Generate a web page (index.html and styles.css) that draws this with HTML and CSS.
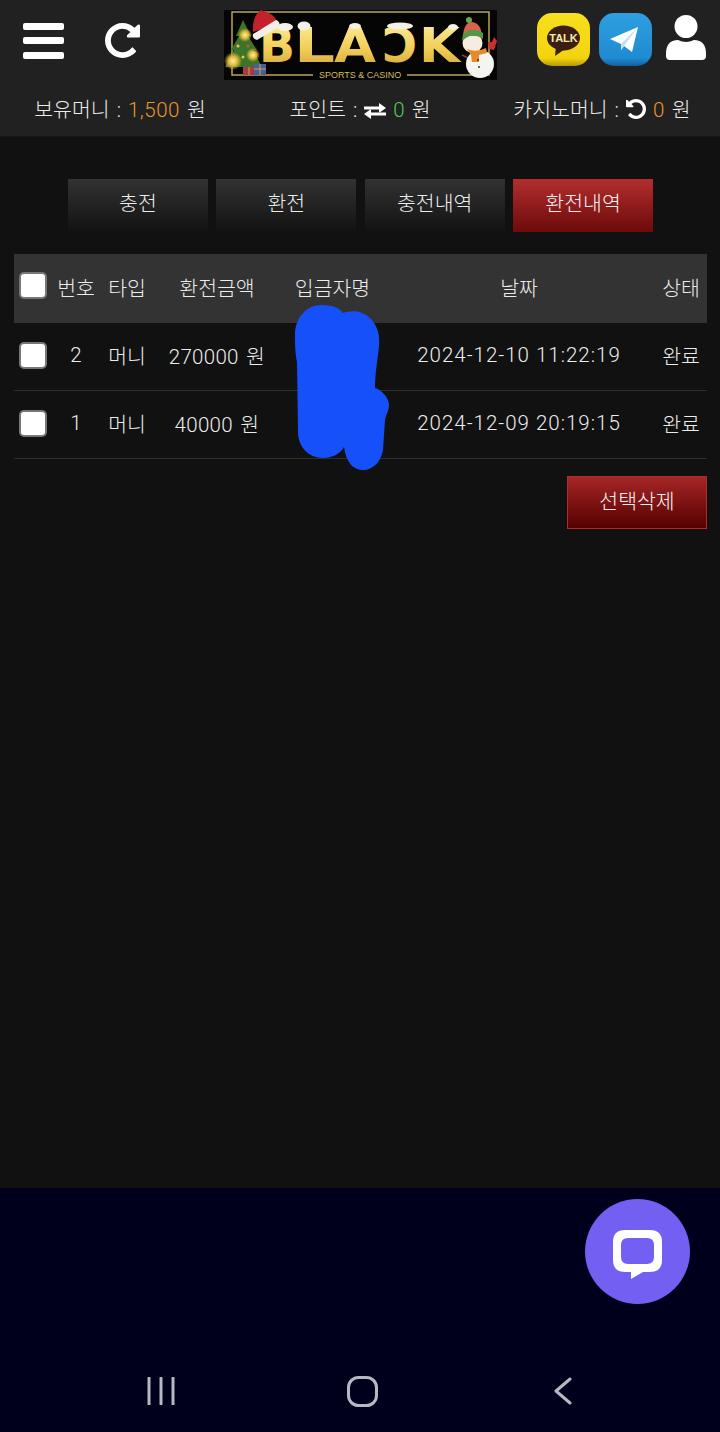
FILE: index.html
```html
<!DOCTYPE html>
<html lang="ko">
<head>
    <meta charset="UTF-8">
    <meta name="viewport" content="width=device-width, initial-scale=1.0">
    <title>환전내역</title>
    <link rel="stylesheet" href="styles.css">
</head>
<body>
    <header class="site-header">
        <div class="top-row">
            <div class="top-left">
                <div class="menu-icon"><span></span><span></span><span></span></div>
                <svg class="refresh-icon" viewBox="128 128 1536 1536" width="35" height="35"><path fill="#fff" d="M1664 256v448q0 26-19 45t-45 19h-448q-42 0-59-40-17-39 14-69l138-138q-148-137-349-137-104 0-198.5 40.5t-163.5 109.5-109.5 163.5-40.5 198.5 40.5 198.5 109.5 163.5 163.5 109.5 198.5 40.5q119 0 225-52t179-147q7-10 23-12 15 0 25 9l137 138q9 8 9.5 20.5t-7.5 22.5q-109 132-264 204.5t-327 72.5q-156 0-298-61t-245-164-164-245-61-298 61-298 164-245 245-164 298-61q147 0 284.5 55.5t244.5 156.5l130-129q29-31 70-14 39 17 39 59z"/></svg>
            </div>
            <svg class="logo" viewBox="0 0 273 70" width="273" height="70">
                <defs>
                    <linearGradient id="gold" x1="0" y1="0" x2="0" y2="1">
                        <stop offset="0" stop-color="#fff3a8"/>
                        <stop offset="0.55" stop-color="#f2cf58"/>
                        <stop offset="1" stop-color="#cfa032"/>
                    </linearGradient>
                    <radialGradient id="glow">
                        <stop offset="0" stop-color="#fff2a0"/>
                        <stop offset="0.5" stop-color="#e0b83a"/>
                        <stop offset="1" stop-color="#e0b83a" stop-opacity="0"/>
                    </radialGradient>
                </defs>
                <rect width="273" height="70" fill="#050505"/>
                <path d="M89 65H8V2H265V65H183" fill="none" stroke="#b9a45c" stroke-width="1.5"/>
                <g class="logo-letters" fill="url(#gold)">
                    <text x="35" y="52" textLength="36" lengthAdjust="spacingAndGlyphs">B</text>
                    <text x="70" y="52" textLength="41" lengthAdjust="spacingAndGlyphs">L</text>
                    <text x="110" y="52" textLength="42" lengthAdjust="spacingAndGlyphs">A</text>
                    <text transform="translate(193 52) scale(-1 1)" x="0" y="0">C</text>
                    <text x="195" y="52" textLength="41" lengthAdjust="spacingAndGlyphs">K</text>
                </g>
                <g fill="#f4f1e6">
                    <ellipse cx="61" cy="17" rx="8" ry="4"/>
                    <ellipse cx="80" cy="16" rx="6.500" ry="4.500"/>
                    <ellipse cx="131" cy="16" rx="6" ry="3"/>
                    <ellipse cx="176" cy="16" rx="13" ry="3.500"/>
                    <ellipse cx="229" cy="17" rx="5" ry="3"/>
                </g>
                <text class="logo-sub" x="95" y="68">SPORTS &amp; CASINO</text>
                <!-- tree -->
                <path d="M19 10L27 26H24L33 40H29L38 57H1L10 40H7L15 26H12Z" fill="#3c7428"/>
                <circle cx="21" cy="25" r="7" fill="url(#glow)"/>
                <circle cx="9" cy="51" r="9" fill="url(#glow)"/>
                <circle cx="29" cy="45" r="7" fill="url(#glow)"/>
                <circle cx="14" cy="36" r="1.500" fill="#e8c84a"/>
                <circle cx="24" cy="36" r="1.500" fill="#d05040"/>
                <circle cx="19" cy="47" r="1.500" fill="#e8c84a"/>
                <rect x="19" y="57" width="12" height="8" fill="#a83a48"/>
                <rect x="30" y="54" width="12" height="11" fill="#46609c"/>
                <path d="M25 57V65M36 54V65M30 59H42" stroke="#d9a04a" stroke-width="1"/>
                <!-- hat -->
                <path d="M29 22Q28 6 37 0Q50 3 54 13Z" fill="#c4222a"/>
                <path d="M29 24L52 10Q57 12 55 17L33 30Q28 29 29 24Z" fill="#f3f0ea"/>
                <!-- snowman -->
                <path d="M238 45L246 49" stroke="#7a4a2a" stroke-width="1.500"/>
                <circle cx="256" cy="54" r="14" fill="#f4f4f0"/>
                <circle cx="248.500" cy="33" r="10" fill="#f6ecdf"/>
                <path d="M239 26Q240 12 248 12Q257 13 258 26Z" fill="#d9624e"/>
                <path d="M238 31Q248 21 259 29L259 23Q248 16 239 24Z" fill="#4f9a4a"/>
                <circle cx="245" cy="10" r="3" fill="#6aa84f"/>
                <path d="M243 39Q252 43 262 38L263 43L255 45L255 52H248L247 45Z" fill="#e8892c"/>
                <path d="M264 32L268 32L270 27L273 31L270 40L265 39Z" fill="#c4322a"/>
                <circle cx="254" cy="50" r="1" fill="#333"/>
                <circle cx="255" cy="57" r="1" fill="#333"/>
            </svg>
            <div class="top-right">
                <svg viewBox="0 0 53 53" width="53" height="53">
                    <defs>
                        <linearGradient id="kakao" x1="0" y1="0" x2="0" y2="1">
                            <stop offset="0" stop-color="#f7e01c"/>
                            <stop offset="0.85" stop-color="#f2d40e"/>
                            <stop offset="1" stop-color="#b8960a"/>
                        </linearGradient>
                    </defs>
                    <rect width="53" height="53" rx="15" fill="url(#kakao)"/>
                    <ellipse cx="26.500" cy="25" rx="16.500" ry="12.500" fill="#3c1e10"/>
                    <path d="M19 33L18 43L28 36Z" fill="#3c1e10"/>
                    <text class="talk-text" x="26.500" y="29">TALK</text>
                </svg>
                <svg viewBox="0 0 53 53" width="53" height="53">
                    <defs>
                        <linearGradient id="tele" x1="0" y1="0" x2="0" y2="1">
                            <stop offset="0" stop-color="#2f9fe0"/>
                            <stop offset="0.85" stop-color="#1f8bd2"/>
                            <stop offset="1" stop-color="#135f9c"/>
                        </linearGradient>
                    </defs>
                    <rect width="53" height="53" rx="15" fill="url(#tele)"/>
                    <path d="M11 26L39 14L33 39L25 33L22 37L22 31Z" fill="#fff"/>
                    <path d="M22 31L39 14L25 33L22 37Z" fill="#c5def0"/>
                </svg>
                <svg class="user-icon" viewBox="0 0 40 45" width="40" height="45">
                    <circle cx="20" cy="11.500" r="11.500" fill="#fff"/>
                    <path d="M0 39Q0 25 12 25Q20 29 28 25Q40 25 40 39V41Q40 45 36 45H4Q0 45 0 41Z" fill="#fff"/>
                </svg>
            </div>
        </div>
        <div class="info-row">
            <div class="info-item">보유머니 : <span class="amount-orange">1,500</span> 원</div>
            <div class="info-item">포인트 : <svg class="info-icon" viewBox="0 0 22 16" width="22" height="16"><path fill="#fff" d="M0 3.500H15V0L22 5L15 10V6.500H0ZM22 9.500H7V6L0 11L7 16V12.500H22Z"/></svg> <span class="amount-green">0</span> 원</div>
            <div class="info-item info-casino">카지노머니 : <svg class="info-icon" viewBox="128 128 1536 1536" width="20" height="20"><path fill="#fff" transform="translate(1792 0) scale(-1 1)" d="M1664 256v448q0 26-19 45t-45 19h-448q-42 0-59-40-17-39 14-69l138-138q-148-137-349-137-104 0-198.5 40.5t-163.5 109.5-109.5 163.5-40.5 198.5 40.5 198.5 109.5 163.5 163.5 109.5 198.5 40.5q119 0 225-52t179-147q7-10 23-12 15 0 25 9l137 138q9 8 9.5 20.5t-7.5 22.5q-109 132-264 204.5t-327 72.5q-156 0-298-61t-245-164-164-245-61-298 61-298 164-245 245-164 298-61q147 0 284.5 55.5t244.5 156.5l130-129q29-31 70-14 39 17 39 59z"/></svg> <span class="amount-orange">0</span> 원</div>
        </div>
    </header>

    <main class="content">
        <div class="tabs">
            <div class="tab">충전</div>
            <div class="tab">환전</div>
            <div class="tab">충전내역</div>
            <div class="tab tab-active">환전내역</div>
        </div>

        <div class="table-wrap">
            <table class="history-table">
                <colgroup>
                    <col class="col-check">
                    <col class="col-no">
                    <col class="col-type">
                    <col class="col-amount">
                    <col class="col-name">
                    <col class="col-date">
                    <col class="col-status">
                </colgroup>
                <thead>
                    <tr>
                        <th><input type="checkbox" class="check"></th>
                        <th>번호</th>
                        <th>타입</th>
                        <th>환전금액</th>
                        <th>입금자명</th>
                        <th>날짜</th>
                        <th class="cell-status">상태</th>
                    </tr>
                </thead>
                <tbody>
                    <tr>
                        <td><input type="checkbox" class="check"></td>
                        <td>2</td>
                        <td>머니</td>
                        <td class="cell-amount">270000 원</td>
                        <td></td>
                        <td class="cell-date">2024-12-10 11:22:19</td>
                        <td class="cell-status">완료</td>
                    </tr>
                    <tr>
                        <td><input type="checkbox" class="check"></td>
                        <td>1</td>
                        <td>머니</td>
                        <td class="cell-amount">40000 원</td>
                        <td></td>
                        <td class="cell-date">2024-12-09 20:19:15</td>
                        <td class="cell-status">완료</td>
                    </tr>
                </tbody>
            </table>
            <!-- scribble over the depositor names -->
            <svg class="scribble" viewBox="294 304 96 166" width="96" height="166">
                <path fill="#1650f8" d="M322 305C335 305 340 309 343 313C350 310 362 310 370 318C378 326 380 336 379 346C378 358 375 372 375 388C382 390 389 398 389 405C389 411 386 414 385 420L383 450C381 462 373 470 363 470C353 470 346 462 344 447C340 454 332 458 323 458C308 458 298 446 298 432L297 362C295 352 295 345 295 335C295 318 306 305 322 305Z"/>
            </svg>
        </div>

        <div class="actions">
            <div class="delete-button">선택삭제</div>
        </div>
    </main>

    <nav class="bottom-nav">
        <div class="nav-slot">
            <svg viewBox="0 0 28 28" width="28" height="28"><path d="M2 1V27M14 1V27M26 1V27" stroke="#b8b8c4" stroke-width="3" stroke-linecap="round" fill="none"/></svg>
        </div>
        <div class="nav-slot">
            <svg viewBox="0 0 31 31" width="31" height="31"><rect x="1.500" y="1.500" width="28" height="28" rx="10" stroke="#b8b8c4" stroke-width="3" fill="none"/></svg>
        </div>
        <div class="nav-slot">
            <svg viewBox="0 0 18 28" width="18" height="28"><path d="M16 2L2 14L16 26" stroke="#b8b8c4" stroke-width="3" stroke-linecap="round" stroke-linejoin="round" fill="none"/></svg>
        </div>
    </nav>

    <div class="chat-button">
        <svg viewBox="0 0 49 49" width="49" height="49">
            <path fill="#fff" fill-rule="evenodd" d="M12 0H37Q49 0 49 12V30Q49 42 37 42H30L18 49V42H12Q0 42 0 30V12Q0 0 12 0ZM15 8Q8 8 8 15V27Q8 34 15 34H34Q41 34 41 27V15Q41 8 34 8Z"/>
        </svg>
    </div>
</body>
</html>
```

FILE: styles.css
```css
html, body {
    margin: 0;
    padding: 0;
}
body {
    position: relative;
    display: flex;
    flex-direction: column;
    width: 720px;
    height: 1432px;
    overflow: hidden;
    background-color: #111;
    color: #ececec;
    font-family: Roboto, "Noto Sans CJK KR", sans-serif;
    font-size: 20.5px;
    font-weight: 300;
}
.site-header {
    background-color: #212121;
    height: 137px;
    border-bottom: 1px solid #161616;
    box-sizing: border-box;
}
.top-row {
    display: grid;
    grid-template-columns: 1fr 273px 1fr;
    align-items: center;
    height: 70px;
    padding-top: 10px;
}
.top-left {
    display: flex;
    align-items: center;
    gap: 41px;
    padding: 0 0 9px 23px;
}
.menu-icon {
    display: flex;
    flex-direction: column;
    justify-content: space-between;
    width: 41px;
    height: 36px;
}
.menu-icon span {
    display: block;
    height: 7px;
    border-radius: 2px;
    background-color: #fff;
}
.logo {
    display: block;
}
.logo-letters text {
    font-family: "DejaVu Sans", sans-serif;
    font-size: 48px;
    font-weight: 700;
}
.logo-sub {
    font-family: "Liberation Sans", sans-serif;
    font-size: 9px;
    font-weight: 400;
    fill: #d4bb60;
}
.top-right {
    display: flex;
    align-items: center;
    gap: 9px;
    padding: 0 0 12px 40px;
}
.user-icon {
    margin: 0 0 3px 5px;
}
.talk-text {
    font-family: "Liberation Sans", sans-serif;
    font-size: 11px;
    font-weight: 700;
    text-anchor: middle;
    fill: #f5e9b0;
}
.info-row {
    display: grid;
    grid-template-columns: repeat(3, 240px);
    padding-top: 16px;
}
.info-item {
    text-align: center;
    white-space: nowrap;
    line-height: 28px;
    word-spacing: 2px;
}
.info-casino {
    padding-left: 4px;
}
.info-icon {
    vertical-align: -2px;
}
.amount-orange {
    color: #e8982a;
    letter-spacing: 0.5px;
}
.amount-green {
    color: #4fd04f;
}
.content {
    flex: 1;
    padding: 42px 13px 0 14px;
}
.tabs {
    display: flex;
    justify-content: center;
    gap: 8.4px;
}
.tab {
    width: 140px;
    height: 53px;
    line-height: 51px;
    text-align: center;
    background: linear-gradient(#323232, #121212);
}
.tab-active {
    background: linear-gradient(#b32e2e, #6c0a0a);
    color: #f2f2f2;
}
.table-wrap {
    position: relative;
    margin-top: 22px;
}
.history-table {
    width: 693px;
    table-layout: fixed;
    border-collapse: separate;
    border-spacing: 0;
}
.col-check { width: 38px; }
.col-no { width: 48px; }
.col-type { width: 54px; }
.col-amount { width: 126px; }
.col-name { width: 105px; }
.col-date { width: 268px; }
.col-status { width: 54px; }
.history-table th {
    box-sizing: border-box;
    height: 69px;
    padding: 0 0 4px;
    background-color: #333;
    font-weight: 300;
}
.history-table td {
    box-sizing: border-box;
    height: 68px;
    padding: 0 0 3px;
    text-align: center;
    border-bottom: 1px solid #2f2f2f;
}
.history-table .cell-amount {
    letter-spacing: 0.3px;
    word-spacing: 2px;
}
.history-table .cell-date {
    letter-spacing: 1px;
}
.history-table .cell-status {
    padding-left: 2px;
}
.check {
    appearance: none;
    display: block;
    width: 28px;
    height: 27px;
    margin: 0 0 0 5px;
    box-sizing: border-box;
    border: 2px solid #777;
    border-radius: 5px;
    background-color: #fff;
}
th .check {
    margin-top: -2px;
}
.scribble {
    position: absolute;
    left: 280px;
    top: 50px;
}
.actions {
    display: flex;
    justify-content: flex-end;
    margin-top: 17px;
}
.delete-button {
    width: 140px;
    height: 53px;
    box-sizing: border-box;
    line-height: 50px;
    text-align: center;
    border: 1px solid #b02c2c;
    background: linear-gradient(#a62626, #560000);
    color: #f2f2f2;
}
.bottom-nav {
    display: flex;
    justify-content: center;
    align-items: center;
    height: 244px;
    padding: 162px 0 0 4px;
    box-sizing: border-box;
    background-color: #00001c;
}
.nav-slot {
    display: flex;
    justify-content: center;
    align-items: center;
    width: 201px;
}
.chat-button {
    position: absolute;
    left: 585px;
    top: 1199px;
    display: flex;
    justify-content: center;
    align-items: center;
    width: 105px;
    height: 105px;
    border-radius: 50%;
    background-color: #7360f2;
}
.chat-button svg {
    margin-top: 6px;
}
```
